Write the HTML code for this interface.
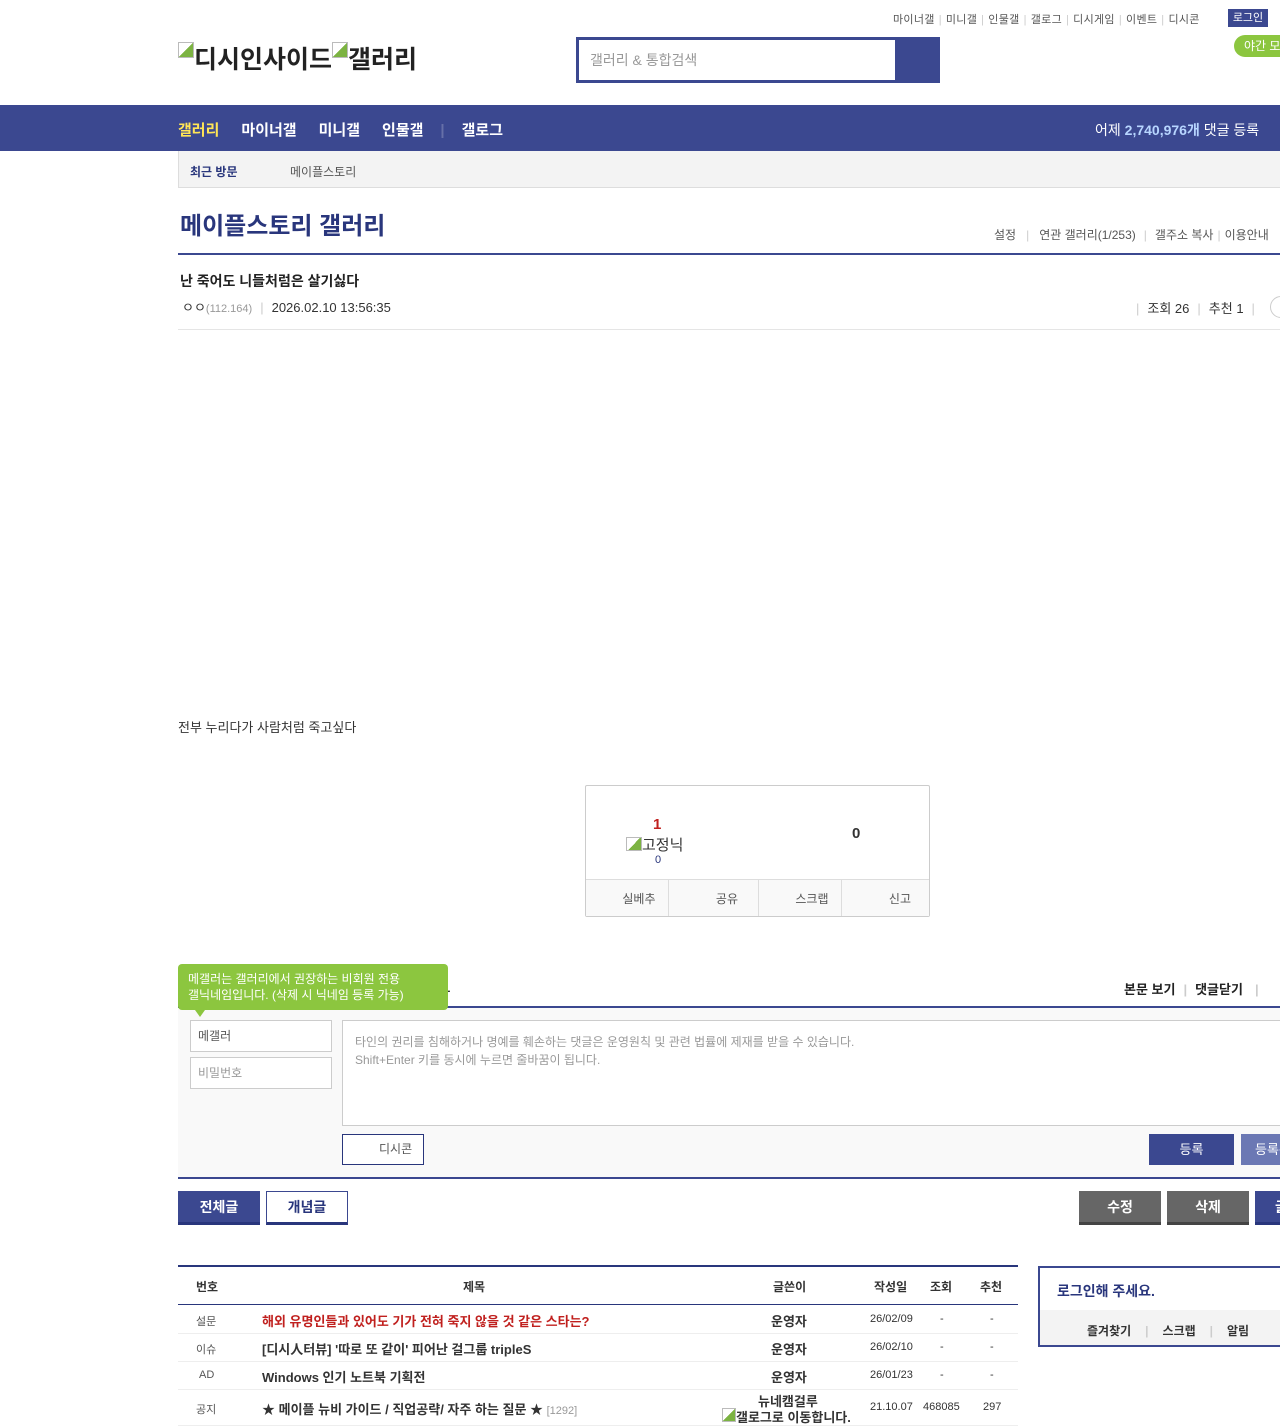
<!DOCTYPE html>
<html><head><meta charset="utf-8"><style>
*{margin:0;padding:0;box-sizing:border-box}
body{width:1280px;height:1428px;overflow:hidden;background:#fff;font-family:"Liberation Sans","Noto Sans CJK KR",sans-serif;color:#333;position:relative}
.a{position:absolute;white-space:nowrap}
.sep{color:#ccc;margin:0 4px}
.ic{display:inline-block;width:16px;height:16px;border:1px solid #bbb;background:linear-gradient(135deg,#fff 50%,#7cb342 50%);vertical-align:top;margin-top:2px}
</style></head><body>
<div class="a" style="left:893px;top:11px;font-size:11px;color:#555;letter-spacing:0.3px">마이너갤<span class="sep">|</span>미니갤<span class="sep">|</span>인물갤<span class="sep">|</span>갤로그<span class="sep">|</span>디시게임<span class="sep">|</span>이벤트<span class="sep">|</span>디시콘</div>
<div class="a" style="left:1228px;top:9px;width:40px;height:18px;background:#3b4890;color:#fff;font-size:11px;text-align:center;line-height:18px">로그인</div>
<div class="a" style="left:1234px;top:35px;width:60px;height:22px;background:#8cc63f;border-radius:11px;color:#fff;font-size:12px;line-height:22px;padding-left:10px">야간 모드</div>
<div class="a" style="left:178px;top:40px;font-size:25px;font-weight:bold;color:#222"><span class="ic"></span>디시인사이드<span class="ic"></span>갤러리</div>
<div class="a" style="left:576px;top:37px;width:364px;height:46px;background:#3b4890"></div>
<div class="a" style="left:579px;top:40px;width:316px;height:40px;background:#fff;font-size:14px;color:#999;line-height:40px;padding-left:11px">갤러리 &amp; 통합검색</div>
<div class="a" style="left:0;top:105px;width:1280px;height:46px;background:#3b4890"></div>
<div class="a" style="left:178px;top:119px;font-size:15px;font-weight:bold;color:#fff"><span style="color:#ffe556">갤러리</span><span style="margin-left:22px">마이너갤</span><span style="margin-left:22px">미니갤</span><span style="margin-left:22px">인물갤</span><span style="color:#6670a8;margin:0 17px">|</span>갤로그</div>
<div class="a" style="left:1095px;top:120px;font-size:14px;color:#fff">어제 <b style="color:#b7d5ff">2,740,976개</b> 댓글 등록</div>
<div class="a" style="left:178px;top:151px;width:1110px;height:37px;background:#f3f3f3;border:1px solid #ddd;border-top:0"></div>
<div class="a" style="left:190px;top:163px;font-size:12px;font-weight:bold;color:#29367c">최근 방문</div>
<div class="a" style="left:290px;top:163px;font-size:12px;color:#555">메이플스토리</div>
<div class="a" style="left:180px;top:206px;font-size:24px;font-weight:bold;color:#29367c">메이플스토리 갤러리</div>
<div class="a" style="left:994px;top:226px;font-size:12px;color:#555">설정<span class="sep" style="margin:0 10px">|</span>연관 갤러리(1/253)<span class="sep" style="margin:0 8px">|</span>갤주소 복사<span class="sep">|</span>이용안내</div>
<div class="a" style="left:178px;top:253px;width:1110px;height:2px;background:#3b4890"></div>
<div class="a" style="left:180px;top:271px;font-size:14px;font-weight:bold;color:#222">난 죽어도 니들처럼은 살기싫다</div>
<div class="a" style="left:182px;top:297px;font-size:13px;color:#333">ㅇㅇ<span style="font-size:11px;color:#999">(112.164)</span><span class="sep" style="margin:0 8px">|</span>2026.02.10 13:56:35</div>
<div class="a" style="left:1136px;top:298px;font-size:13px;color:#333"><span class="sep" style="margin:0 8px 0 0">|</span>조회 26<span class="sep" style="margin:0 8px">|</span>추천 1<span class="sep" style="margin:0 8px">|</span></div>
<div class="a" style="left:1270px;top:296px;width:24px;height:22px;border:1px solid #ccc;border-radius:11px"></div>
<div class="a" style="left:178px;top:329px;width:1110px;height:1px;background:#e5e5e5"></div>
<div class="a" style="left:178px;top:717px;font-size:13px;color:#333">전부 누리다가 사람처럼 죽고싶다</div>
<div class="a" style="left:585px;top:785px;width:345px;height:132px;border:1px solid #ccc;border-radius:2px"></div>
<div class="a" style="left:653px;top:816px;font-size:15px;font-weight:bold;color:#c0201e">1</div>
<div class="a" style="left:626px;top:834px;font-size:15px;color:#333"><span class="ic" style="width:16px;height:14px;margin-top:3px"></span>고정닉</div>
<div class="a" style="left:655px;top:854px;font-size:11px;color:#29367c">0</div>
<div class="a" style="left:852px;top:825px;font-size:15px;font-weight:bold;color:#333">0</div>
<div class="a" style="left:586px;top:879px;width:343px;height:37px;background:#f9f9f9;border-top:1px solid #ddd;display:flex;font-size:12px;color:#555">
<div style="flex:1;border-right:1px solid #ddd;text-align:right;padding-right:12px;line-height:38px">실베추</div><div style="flex:1;border-right:1px solid #ddd;text-align:right;padding-right:20px;line-height:38px">공유</div><div style="flex:1;border-right:1px solid #ddd;text-align:right;padding-right:12px;line-height:38px">스크랩</div><div style="flex:1;text-align:right;padding-right:18px;line-height:38px">신고</div></div>
<div class="a" style="left:1124px;top:979px;font-size:13px;font-weight:bold;color:#222">본문 보기<span class="sep" style="margin:0 8px">|</span>댓글닫기<span class="sep" style="margin:0 12px">|</span></div>
<div class="a" style="left:178px;top:1006px;width:1110px;height:2px;background:#3b4890"></div>
<div class="a" style="left:178px;top:1008px;width:1110px;height:170px;background:#f9f9f9"></div>
<div class="a" style="left:440px;top:979px;font-size:13px;font-weight:bold">ㄴ</div>
<div class="a" style="left:178px;top:964px;width:270px;height:46px;background:#8cc63f;border-radius:4px;color:#fff;font-size:12px;line-height:16px;padding:7px 10px">메갤러는 갤러리에서 권장하는 비회원 전용<br>갤닉네임입니다. (삭제 시 닉네임 등록 가능)</div>
<div class="a" style="left:195px;top:1010px;width:0;height:0;border-left:5px solid transparent;border-right:5px solid transparent;border-top:7px solid #8cc63f"></div>
<div class="a" style="left:190px;top:1020px;width:142px;height:32px;border:1px solid #ccc;background:#fff;font-size:12px;color:#555;line-height:30px;padding-left:7px">메갤러</div>
<div class="a" style="left:190px;top:1057px;width:142px;height:32px;border:1px solid #ccc;background:#fff;font-size:12px;color:#999;line-height:30px;padding-left:7px">비밀번호</div>
<div class="a" style="left:342px;top:1020px;width:950px;height:106px;border:1px solid #ccc;background:#fff;font-size:12px;color:#999;line-height:18px;padding:12px 12px">타인의 권리를 침해하거나 명예를 훼손하는 댓글은 운영원칙 및 관련 법률에 제재를 받을 수 있습니다.<br>Shift+Enter 키를 동시에 누르면 줄바꿈이 됩니다.</div>
<div class="a" style="left:342px;top:1134px;width:82px;height:31px;border:1px solid #29367c;background:#fff;font-size:12px;color:#555;line-height:29px;padding-left:36px">디시콘</div>
<div class="a" style="left:1149px;top:1134px;width:85px;height:31px;background:#3b4890;color:#fff;font-size:13px;text-align:center;line-height:31px">등록</div>
<div class="a" style="left:1241px;top:1134px;width:60px;height:31px;background:#6b78b4;color:#fff;font-size:13px;line-height:31px;padding-left:14px">등록+추천</div>
<div class="a" style="left:178px;top:1177px;width:1110px;height:2px;background:#3b4890"></div>
<div class="a" style="left:178px;top:1191px;width:82px;height:34px;background:#3b4890;border-bottom:3px solid #29367c;color:#fff;font-size:14px;font-weight:bold;text-align:center;line-height:32px">전체글</div>
<div class="a" style="left:266px;top:1191px;width:82px;height:34px;background:#fff;border:1px solid #3b4890;border-bottom:3px solid #29367c;color:#29367c;font-size:14px;font-weight:bold;text-align:center;line-height:30px">개념글</div>
<div class="a" style="left:1079px;top:1191px;width:82px;height:34px;background:#666;border-bottom:3px solid #444;color:#fff;font-size:14px;font-weight:bold;text-align:center;line-height:32px">수정</div>
<div class="a" style="left:1167px;top:1191px;width:82px;height:34px;background:#666;border-bottom:3px solid #444;color:#fff;font-size:14px;font-weight:bold;text-align:center;line-height:32px">삭제</div>
<div class="a" style="left:1255px;top:1191px;width:82px;height:34px;background:#3b4890;border-bottom:3px solid #29367c;color:#fff;font-size:14px;font-weight:bold;line-height:32px;padding-left:20px">글쓰기</div>
<div class="a" style="left:178px;top:1265px;width:840px;height:2px;background:#29367c"></div>
<div class="a" style="left:178px;top:1267px;width:840px;height:38px;border-bottom:1px solid #29367c;font-size:12px;font-weight:bold;color:#333">
<span class="a" style="left:18px;top:11px">번호</span><span class="a" style="left:285px;top:11px">제목</span><span class="a" style="left:595px;top:11px">글쓴이</span><span class="a" style="left:696px;top:11px">작성일</span><span class="a" style="left:752px;top:11px">조회</span><span class="a" style="left:802px;top:11px">추천</span></div>
<div class="a" style="left:178px;top:1306px;width:840px;height:28px;border-bottom:1px solid #eee;font-size:11px">
<span class="a" style="left:18px;top:7px;color:#555">설문</span><b class="a" style="left:84px;top:5px;font-size:13px;color:#c0201e">해외 유명인들과 있어도 기가 전혀 죽지 않을 것 같은 스타는?</b><b class="a" style="left:593px;top:5px;font-size:13px">운영자</b><span class="a" style="left:692px;top:7px">26/02/09</span><span class="a" style="left:762px;top:7px">-</span><span class="a" style="left:812px;top:7px">-</span></div>
<div class="a" style="left:178px;top:1334px;width:840px;height:28px;border-bottom:1px solid #eee;font-size:11px">
<span class="a" style="left:18px;top:7px;color:#555">이슈</span><b class="a" style="left:84px;top:5px;font-size:13px">[디시人터뷰] '따로 또 같이' 피어난 걸그룹 tripleS</b><b class="a" style="left:593px;top:5px;font-size:13px">운영자</b><span class="a" style="left:692px;top:7px">26/02/10</span><span class="a" style="left:762px;top:7px">-</span><span class="a" style="left:812px;top:7px">-</span></div>
<div class="a" style="left:178px;top:1362px;width:840px;height:28px;border-bottom:1px solid #eee;font-size:11px">
<span class="a" style="left:21px;top:7px;color:#555">AD</span><b class="a" style="left:84px;top:5px;font-size:13px">Windows 인기 노트북 기획전</b><b class="a" style="left:593px;top:5px;font-size:13px">운영자</b><span class="a" style="left:692px;top:7px">26/01/23</span><span class="a" style="left:762px;top:7px">-</span><span class="a" style="left:812px;top:7px">-</span></div>
<div class="a" style="left:178px;top:1390px;width:840px;height:36px;border-bottom:1px solid #eee;font-size:11px">
<span class="a" style="left:18px;top:11px;color:#555">공지</span><b class="a" style="left:84px;top:9px;font-size:13px">★ 메이플 뉴비 가이드 / 직업공략/ 자주 하는 질문 ★ <span style="font-weight:normal;font-size:11px;color:#999">[1292]</span></b><b class="a" style="left:580px;top:1px;font-size:13px">뉴네캠걸루</b><b class="a" style="left:544px;top:17px;font-size:13px"><span class="ic" style="width:14px;height:14px;margin-top:1px"></span>갤로그로 이동합니다.</b><span class="a" style="left:692px;top:11px">21.10.07</span><span class="a" style="left:745px;top:11px">468085</span><span class="a" style="left:805px;top:11px">297</span></div>
<div class="a" style="left:1038px;top:1266px;width:260px;height:81px;border:2px solid #3b4890"></div>
<div class="a" style="left:1057px;top:1281px;font-size:14px;font-weight:bold;color:#29367c">로그인해 주세요.</div>
<div class="a" style="left:1040px;top:1310px;width:250px;height:35px;background:#f3f3f3"></div>
<div class="a" style="left:1087px;top:1322px;font-size:12px;font-weight:bold;color:#333">즐겨찾기<span class="sep" style="margin:0 14px">|</span>스크랩<span class="sep" style="margin:0 14px">|</span>알림</div>
</body></html>
